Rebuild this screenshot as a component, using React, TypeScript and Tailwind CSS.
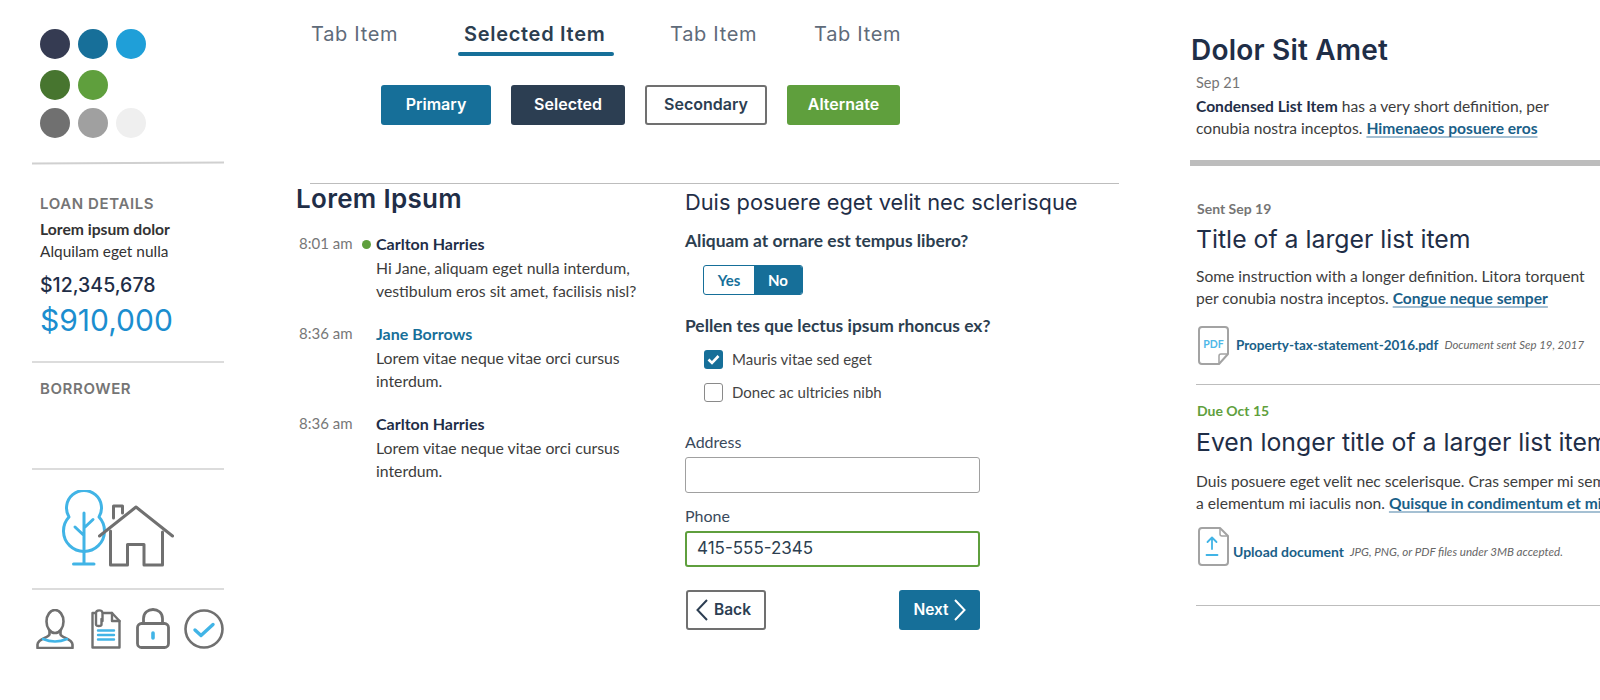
const heading = "font-['Inter','Liberation_Sans',sans-serif]";
const body = "font-['Lato','Noto_Sans',sans-serif]";

const SWATCHES = [
  ["bg-[#353b52]", "bg-[#176f99]", "bg-[#1f9fd8]"],
  ["bg-[#47752f]", "bg-[#5f9f3d]"],
  ["bg-[#707070]", "bg-[#a0a0a0]", "bg-[#efefef]"],
];

const MESSAGES = [
  { time: "8:01 am", name: "Carlton Harries", dot: true, lines: ["Hi Jane, aliquam eget nulla interdum,", "vestibulum eros sit amet, facilisis nisl?"] },
  { time: "8:36 am", name: "Jane Borrows", blue: true, lines: ["Lorem vitae neque vitae orci cursus", "interdum."] },
  { time: "8:36 am", name: "Carlton Harries", lines: ["Lorem vitae neque vitae orci cursus", "interdum."] },
];

function TreeHouse() {
  return (
    <svg width="112" height="78" viewBox="0 0 112 78" fill="none" strokeWidth="3" strokeLinecap="round" strokeLinejoin="round">
      <g stroke="#41b4e6">
        <path d="M7 27A17.5 17.5 0 1 1 37 27A20.5 20.5 0 1 1 7 27Z" />
        <path d="M22 23V74M11.5 74H32M13 37L22 45.5M31 29.5L22 38" />
      </g>
      <g stroke="#707070">
        <path d="M37.5 46L74 17L110.5 46" />
        <path d="M51.5 28V16H60.5V23" />
        <path d="M48.5 41V75H65.5V54.5H82V75H100.5V42" />
      </g>
    </svg>
  );
}

function Person() {
  return (
    <svg width="38" height="40" viewBox="0 0 38 40" fill="none" strokeWidth="2.6" strokeLinecap="round" strokeLinejoin="round">
      <g stroke="#707070">
        <ellipse cx="19" cy="12.5" rx="8.5" ry="11.5" />
        <path d="M13.5 22V25.5C12 29 2 29.5 1.5 35.5V39H36.5V35.5C36 29.5 26 29 24.5 25.5V22" />
      </g>
      <path d="M7 30Q19 35 31 30" stroke="#41b4e6" />
    </svg>
  );
}

function Doc() {
  return (
    <svg width="30" height="40" viewBox="0 0 30 40" fill="none" strokeWidth="2.4" strokeLinecap="round" strokeLinejoin="round">
      <g stroke="#707070">
        <path d="M13 4H21L28.5 12V38.5H1.5V4H3.5" />
        <path d="M21 4V12H28.5" />
        <path d="M10.5 10V15.5C10.5 17.5 5 17.5 5 15.5V4C5 0.5 11.5 0.5 11.5 4V12" />
      </g>
      <path d="M7 21.5H23M7 26H23M7 30.5H23" stroke="#41b4e6" />
    </svg>
  );
}

function Lock() {
  return (
    <svg width="34" height="41" viewBox="0 0 34 41" fill="none" strokeWidth="2.8" strokeLinecap="round">
      <g stroke="#707070">
        <rect x="1.5" y="15.5" width="31" height="24" rx="4" />
        <path d="M7.5 15.5V10.5C7.5 -1.5 26.5 -1.5 26.5 10.5V15.5" />
      </g>
      <path d="M17 25V30" stroke="#41b4e6" strokeWidth="3.6" />
    </svg>
  );
}

function Check() {
  return (
    <svg width="40" height="40" viewBox="0 0 40 40" fill="none" strokeLinecap="round" strokeLinejoin="round">
      <circle cx="20" cy="20" r="18.5" stroke="#707070" strokeWidth="2.6" />
      <path d="M11 21L17 26.5L29 15.5" stroke="#41b4e6" strokeWidth="3.4" />
    </svg>
  );
}

function PdfIcon() {
  return (
    <svg width="31" height="39" viewBox="0 0 31 39" fill="none" className="shrink-0">
      <path d="M4 1H27A3 3 0 0 1 30 4V28L21 38H4A3 3 0 0 1 1 35V4A3 3 0 0 1 4 1Z" stroke="#a3a3a3" strokeWidth="2" strokeLinejoin="round" />
      <path d="M30 28H23A2 2 0 0 0 21 30V38" stroke="#a3a3a3" strokeWidth="1.5" />
      <text x="15.5" y="22" textAnchor="middle" fontSize="10.5" fontWeight="700" fill="#4fb8e8" fontFamily="Lato, sans-serif">PDF</text>
    </svg>
  );
}

function UploadIcon() {
  return (
    <svg width="31" height="39" viewBox="0 0 31 39" fill="none" className="shrink-0">
      <path d="M4 1H22L30 9V35A3 3 0 0 1 27 38H4A3 3 0 0 1 1 35V4A3 3 0 0 1 4 1Z" stroke="#a3a3a3" strokeWidth="2" strokeLinejoin="round" />
      <path d="M22 1V7A2 2 0 0 0 24 9H30" stroke="#a3a3a3" strokeWidth="1.5" />
      <path d="M14 22V11M9.5 15L14 10.5L18.5 15M8.5 28H19.5" stroke="#41b4e6" strokeWidth="1.8" strokeLinecap="round" strokeLinejoin="round" />
    </svg>
  );
}

function LinkText({ children }: { children: string }) {
  return (
    <a className="font-bold text-[#1a6088] underline decoration-[#a5c0d3] decoration-2 underline-offset-2 [text-decoration-skip-ink:none]">
      {children}
    </a>
  );
}

export default function App() {
  return (
    <div className={`flex h-[700px] w-[1600px] overflow-hidden bg-white ${body}`}>
      {/* left rail */}
      <aside className="ml-[32px] flex w-[192px] shrink-0 flex-col">
        <div className="flex flex-col pl-[8px] pt-[29px]">
          {SWATCHES.map((row, i) => (
            <div key={i} className={`flex gap-[8px] ${i === 1 ? "mt-[11px]" : i === 2 ? "mt-[8px]" : ""}`}>
              {row.map((c) => (
                <span key={c} className={`h-[30px] w-[30px] rounded-full ${c}`} />
              ))}
            </div>
          ))}
        </div>
        <div className="mt-[24px] h-[2px] -rotate-[0.3deg] bg-[#d0d0d0]" />
        <div className="pl-[8px] pt-[30px]">
          <h3 className={`text-[15px] font-semibold leading-[20px] tracking-[0.6px] text-[#757575] ${heading}`}>LOAN DETAILS</h3>
          <p className="mt-[4px] text-[15.7px] font-bold leading-[22px] text-[#333]">Lorem ipsum dolor</p>
          <p className="text-[15.4px] leading-[22px] text-[#333]">Alquilam eget nulla</p>
          <p className={`mt-[10px] text-[19.5px] font-medium leading-[26px] text-[#1f2e47] ${heading}`}>$12,345,678</p>
          <p className={`mt-[4px] text-[30px] leading-[36px] text-[#1b8ecf] ${heading}`}>$910,000</p>
        </div>
        <div className="mt-[23px] h-[2px] bg-[#dcdcdc]" />
        <h3 className={`pl-[8px] pt-[16px] text-[15px] font-semibold leading-[20px] tracking-[0.6px] text-[#757575] ${heading}`}>BORROWER</h3>
        <div className="mt-[69px] h-[2px] bg-[#dcdcdc]" />
        <div className="pl-[30px] pt-[20px]">
          <TreeHouse />
        </div>
        <div className="mt-[20px] h-[2px] bg-[#dcdcdc]" />
        <div className="mt-[18px] flex items-end pl-[4px]">
          <Person />
          <span className="ml-[17px]"><Doc /></span>
          <span className="ml-[15px]"><Lock /></span>
          <span className="ml-[14px]"><Check /></span>
        </div>
      </aside>

      {/* middle */}
      <main className="ml-[72px] w-[823px] shrink-0">
        <nav className={`flex pl-[15px] pt-[21px] text-[20px] leading-[26px] tracking-[0.7px] ${heading}`}>
          <span className="w-[147px] text-[#5f6b7a]">Tab Item</span>
          <span className="flex w-[212px] flex-col">
            <span className="pl-[6px] font-semibold text-[#2c3e50]">Selected Item</span>
            <span className="mt-[5px] h-[4px] w-[156px] rounded-full bg-[#166f99]" />
          </span>
          <span className="w-[144px] text-[#5f6b7a]">Tab Item</span>
          <span className="text-[#5f6b7a]">Tab Item</span>
        </nav>
        <div className={`ml-[85px] mt-[29px] flex gap-[20px] text-[16px] font-semibold ${heading}`}>
          <button className="h-[40px] w-[110px] rounded-[3px] bg-[#166f99] pb-[2px] text-white">Primary</button>
          <button className="h-[40px] w-[114px] rounded-[3px] bg-[#2c3e52] pb-[2px] text-white">Selected</button>
          <button className="h-[40px] w-[122px] rounded-[3px] border-2 border-[#707070] pb-[2px] text-[#2c3e52]">Secondary</button>
          <button className="h-[40px] w-[113px] rounded-[3px] bg-[#5f9f3d] pb-[2px] text-white">Alternate</button>
        </div>
        <div className="ml-[14px] mt-[58px] h-[1px] bg-[#bdbdbd]" />
        <div className="flex">
          <section className="w-[389px] shrink-0">
            <h2 className={`text-[26px] font-semibold leading-[30px] tracking-[0.3px] text-[#1f2e47] ${heading}`}>Lorem Ipsum</h2>
            <div className="mt-[18px] flex flex-col gap-[20px]">
              {MESSAGES.map((m, i) => (
                <div key={i} className="flex text-[15.8px] leading-[23px]">
                  <span className="w-[66px] shrink-0 pl-[3px] text-[15px] text-[#777]">{m.time}</span>
                  <span className="flex w-[14px] shrink-0 items-start pt-[8px]">
                    {m.dot && <span className="h-[9px] w-[9px] rounded-full bg-[#5f9f3d]" />}
                  </span>
                  <div>
                    <p className={`mb-[1px] text-[16px] font-bold ${m.blue ? "text-[#176f99]" : "text-[#1f2e47]"}`}>{m.name}</p>
                    {m.lines.map((l) => (
                      <p key={l} className="text-[#3d3d3d]">{l}</p>
                    ))}
                  </div>
                </div>
              ))}
            </div>
          </section>
          <section className="flex-1">
            <h2 className={`pt-[3px] text-[21.8px] leading-[30px] text-[#1f2e47] ${heading}`}>Duis posuere eget velit nec sclerisque</h2>
            <p className="mt-[12px] text-[17.4px] font-bold leading-[24px] text-[#2c3e50]">Aliquam at ornare est tempus libero?</p>
            <div className="ml-[18px] mt-[12px] flex h-[30px] w-[100px] overflow-hidden rounded-[3px] border border-[#166f99] text-[15px] font-bold">
              <span className="flex w-[50px] items-center justify-center text-[#166f99]">Yes</span>
              <span className="flex flex-1 items-center justify-center bg-[#166f99] text-white">No</span>
            </div>
            <p className="mt-[19px] text-[17.4px] font-bold leading-[24px] text-[#2c3e50]">Pellen tes que lectus ipsum rhoncus ex?</p>
            <label className="ml-[19px] mt-[12px] flex h-[19px] items-center gap-[9px] text-[15px] text-[#444]">
              <span className="flex h-[19px] w-[19px] items-center justify-center rounded-[3px] bg-[#166f99]">
                <svg width="13" height="11" viewBox="0 0 13 11" fill="none">
                  <path d="M1.5 5.5L5 9L11.5 2" stroke="#fff" strokeWidth="2.6" />
                </svg>
              </span>
              Mauris vitae sed eget
            </label>
            <label className="ml-[19px] mt-[14px] flex h-[19px] items-center gap-[9px] text-[15px] text-[#444]">
              <span className="h-[19px] w-[19px] rounded-[3px] border border-[#8a8a8a]" />
              Donec ac ultricies nibh
            </label>
            <p className="mt-[30px] text-[16px] leading-[20px] text-[#3a4a5c]">Address</p>
            <div className="mt-[5px] h-[36px] w-[295px] rounded-[3px] border border-[#a0a0a0]" />
            <p className="mt-[13px] text-[16px] leading-[20px] text-[#3a4a5c]">Phone</p>
            <div className={`mt-[5px] flex h-[36px] w-[295px] items-center rounded-[3px] border-2 border-[#5f9f3d] pl-[10px] text-[17px] text-[#2c3e50] ${heading}`}>
              415-555-2345
            </div>
            <div className={`mt-[23px] flex w-[295px] justify-between text-[15.5px] font-semibold ${heading}`}>
              <button className="ml-[1px] flex h-[40px] w-[80px] items-center justify-start gap-[6px] rounded-[3px] border-2 border-[#707070] pl-[8px] text-[#2c3e52]">
                <svg width="12" height="22" viewBox="0 0 12 22" fill="none">
                  <path d="M11 1L1.5 11L11 21" stroke="#2c3e52" strokeWidth="2" />
                </svg>
                Back
              </button>
              <button className="flex h-[40px] w-[81px] items-center justify-center gap-[5px] rounded-[3px] bg-[#166f99] text-white">
                Next
                <svg width="12" height="22" viewBox="0 0 12 22" fill="none">
                  <path d="M1 1L10.5 11L1 21" stroke="#fff" strokeWidth="2" />
                </svg>
              </button>
            </div>
          </section>
        </div>
      </main>

      {/* right list */}
      <section className="ml-[71px] w-[410px] shrink-0 overflow-hidden">
        <h2 className={`pl-[1px] pt-[34px] text-[28px] font-semibold leading-[32px] tracking-[0.2px] text-[#1f2e47] ${heading}`}>Dolor Sit Amet</h2>
        <div className="pl-[6px] pt-[6px] text-[15.6px] leading-[22.5px] text-[#3d3d3d]">
          <p className="text-[14.5px] text-[#757575]">Sep 21</p>
          <p>
            <b className="text-[#1f2e47]">Condensed List Item</b> has a very short definition, per
          </p>
          <p>
            conubia nostra inceptos. <LinkText>Himenaeos posuere eros</LinkText>
          </p>
        </div>
        <div className="mt-[20px] h-[6px] bg-[#bdbdbd]" />
        <div className="ml-[6px] border-b border-[#bdbdbd] pb-[19px] pt-[33px]">
          <p className="pl-[1px] text-[14px] font-bold leading-[20px] text-[#757575]">Sent Sep 19</p>
          <h3 className={`mt-[5px] text-[24.8px] leading-[30px] text-[#1f2e47] ${heading}`}>Title of a larger list item</h3>
          <p className="mt-[11px] text-[15.6px] leading-[22.5px] text-[#3d3d3d]">Some instruction with a longer definition. Litora torquent</p>
          <p className="text-[15.6px] leading-[22.5px] text-[#3d3d3d]">
            per conubia nostra inceptos. <LinkText>Congue neque semper</LinkText>
          </p>
          <div className="ml-[2px] mt-[16px] flex items-center gap-[6px] whitespace-nowrap">
            <PdfIcon />
            <span className="pl-[1px] text-[13.5px] font-bold text-[#1a6088]">Property-tax-statement-2016.pdf</span>
            <span className="text-[11.4px] italic text-[#666]">Document sent Sep 19, 2017</span>
          </div>
        </div>
        <div className="ml-[6px] border-b border-[#bdbdbd] pb-[39px] pt-[16px]">
          <p className="pl-[1px] text-[14px] font-bold leading-[20px] text-[#5f9f3d]">Due Oct 15</p>
          <h3 className={`mt-[6px] whitespace-nowrap text-[24.8px] leading-[30px] text-[#1f2e47] ${heading}`}>Even longer title of a larger list item</h3>
          <p className="mt-[13px] whitespace-nowrap text-[15.6px] leading-[22.5px] text-[#3d3d3d]">Duis posuere eget velit nec scelerisque. Cras semper mi sem</p>
          <p className="whitespace-nowrap text-[15.6px] leading-[22.5px] text-[#3d3d3d]">
            a elementum mi iaculis non. <LinkText>Quisque in condimentum et mi</LinkText>
          </p>
          <div className="ml-[2px] mt-[12px] flex items-center gap-[4px] whitespace-nowrap">
            <UploadIcon />
            <span className="pt-[11px] text-[14px] font-bold text-[#1a6088]">Upload document</span>
            <span className="pl-[2px] pt-[11px] text-[11.6px] italic text-[#666]">JPG, PNG, or PDF files under 3MB accepted.</span>
          </div>
        </div>
      </section>
    </div>
  );
}
